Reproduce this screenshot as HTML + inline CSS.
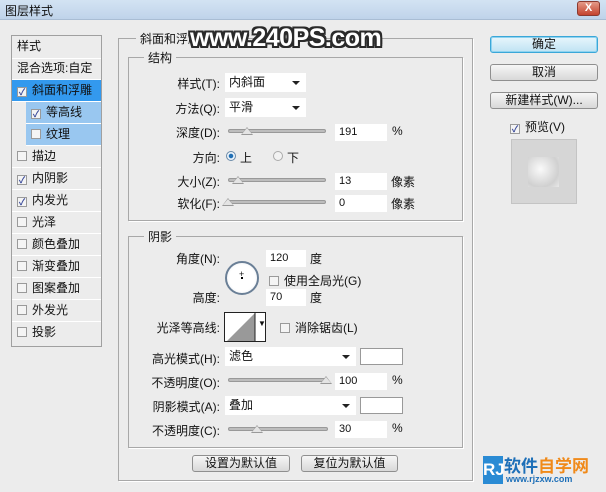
<!DOCTYPE html>
<html><head><meta charset="utf-8"><style>
*{box-sizing:border-box;margin:0;padding:0}
body{width:606px;height:492px;background:#ececec;font-family:"Liberation Sans","Noto Sans CJK SC",sans-serif;font-size:12px;color:#111;position:relative;overflow:hidden}
.a{position:absolute;white-space:nowrap}
.title{left:0;top:0;width:606px;height:20px;background:linear-gradient(#d3e3f3,#bfd3ea);border-bottom:1px solid #a9bdd4}
.close{left:577px;top:1px;width:23px;height:15px;background:linear-gradient(#e49a88,#c4432e);border:1px solid #8a3a30;border-radius:3px;color:#fff;font-weight:bold;font-size:11px;text-align:center;line-height:13px}
.lp{left:11px;top:35px;width:91px;height:312px;border:1px solid #a0a0a0;background:#ececec}
.row{position:absolute;left:0;width:89px;height:22px;line-height:21px;padding-left:5px;border-bottom:1px solid #fff}
.cb{display:inline-block;width:10px;height:10px;border:1px solid #9a9a9a;background:#f4f4f4;vertical-align:-1px;margin-right:5px;font-size:9px;line-height:8px;color:#3a4a9a;text-align:center;font-weight:bold}
.box{position:absolute;border:1px solid #a8a8a8;box-shadow:1px 1px 0 #fff}
.lbl{position:absolute;background:#ececec;padding:0 4px;font-size:12px}
.inp{position:absolute;background:#fff;height:17px;line-height:17px;padding-left:4px;font-size:11px}
.sel{position:absolute;background:#fff;height:19px;line-height:19px;padding-left:4px;font-size:12px}
.sel:after{content:"";position:absolute;right:6px;top:8px;border:4px solid transparent;border-top:4px solid #222}
.sl{position:absolute;height:4px;background:#bdbdbd;border:1px solid #999;border-radius:2px}
.th{position:absolute;width:0;height:0;border-left:6px solid transparent;border-right:6px solid transparent;border-bottom:8px solid #999}
.th:after{content:"";position:absolute;left:-5px;top:1px;border-left:5px solid transparent;border-right:5px solid transparent;border-bottom:6px solid #e4e4e4}
.r{text-align:right}
.btn{position:absolute;height:17px;border:1px solid #8f8f8f;border-radius:3px;background:linear-gradient(#f6f6f6,#d8d8d8);text-align:center;line-height:15px;font-size:12px}
</style></head><body>
<div class="a title"></div>
<div class="a" style="left:5px;top:2px;font-size:12px">图层样式</div>
<div class="a close">X</div>

<div class="a lp">
<div class="row" style="top:0;height:23px;line-height:20px">样式</div>
<div class="row" style="top:22px;line-height:20px">混合选项:自定</div>
<div class="row" style="top:44px;background:#3399ee;color:#111"><span class="cb">✓</span>斜面和浮雕</div>
<div class="row" style="top:66px;left:14px;width:75px;background:#99c7f0"><span class="cb">✓</span>等高线</div>
<div class="row" style="top:88px;left:14px;width:75px;background:#99c7f0"><span class="cb"></span>纹理</div>
<div class="row" style="top:110px"><span class="cb"></span>描边</div>
<div class="row" style="top:132px"><span class="cb">✓</span>内阴影</div>
<div class="row" style="top:154px"><span class="cb">✓</span>内发光</div>
<div class="row" style="top:176px"><span class="cb"></span>光泽</div>
<div class="row" style="top:198px"><span class="cb"></span>颜色叠加</div>
<div class="row" style="top:220px"><span class="cb"></span>渐变叠加</div>
<div class="row" style="top:242px"><span class="cb"></span>图案叠加</div>
<div class="row" style="top:264px"><span class="cb"></span>外发光</div>
<div class="row" style="top:286px;border:0"><span class="cb"></span>投影</div>
</div>

<div class="box" style="left:118px;top:38px;width:355px;height:443px"></div>
<div class="lbl" style="left:136px;top:30px">斜面和浮雕</div>
<div class="a" style="left:190px;top:24px;font-size:25px;font-weight:bold;color:#fff;letter-spacing:-0.5px;text-shadow:-2px 0 #2a2a2a,2px 0 #2a2a2a,0 2px #2a2a2a,0 -2px #2a2a2a,-2px -2px #2a2a2a,2px 2px #2a2a2a,2px -2px #2a2a2a,-2px 2px #2a2a2a">www.240PS.com</div>

<div class="box" style="left:128px;top:57px;width:335px;height:164px"></div>
<div class="lbl" style="left:144px;top:49px">结构</div>
<div class="a r" style="left:150px;top:75px;width:70px">样式(T):</div>
<div class="sel" style="left:225px;top:73px;width:81px">内斜面</div>
<div class="a r" style="left:150px;top:100px;width:70px">方法(Q):</div>
<div class="sel" style="left:225px;top:98px;width:81px">平滑</div>
<div class="a r" style="left:150px;top:124px;width:70px">深度(D):</div>
<div class="sl" style="left:228px;top:129px;width:98px"></div><div class="th" style="left:241px;top:127px"></div>
<div class="inp" style="left:335px;top:124px;width:52px">191</div><div class="a" style="left:392px;top:124px">%</div>
<div class="a r" style="left:150px;top:149px;width:70px">方向:</div>
<div class="a" style="left:226px;top:151px;width:10px;height:10px;border-radius:50%;border:1px solid #6a8aa8;background:radial-gradient(#1f6fb5 35%,#eaf2fa 45%)"></div>
<div class="a" style="left:240px;top:149px">上</div>
<div class="a" style="left:273px;top:151px;width:10px;height:10px;border-radius:50%;border:1px solid #aaa;background:#f2f2f2"></div>
<div class="a" style="left:287px;top:149px">下</div>
<div class="a r" style="left:150px;top:173px;width:70px">大小(Z):</div>
<div class="sl" style="left:228px;top:178px;width:98px"></div><div class="th" style="left:232px;top:176px"></div>
<div class="inp" style="left:335px;top:173px;width:52px">13</div><div class="a" style="left:391px;top:173px">像素</div>
<div class="a r" style="left:150px;top:195px;width:70px">软化(F):</div>
<div class="sl" style="left:228px;top:200px;width:98px"></div><div class="th" style="left:222px;top:198px"></div>
<div class="inp" style="left:335px;top:195px;width:52px">0</div><div class="a" style="left:391px;top:195px">像素</div>

<div class="box" style="left:128px;top:236px;width:335px;height:212px"></div>
<div class="lbl" style="left:144px;top:228px">阴影</div>
<div class="a r" style="left:150px;top:250px;width:70px">角度(N):</div>
<div class="a" style="left:225px;top:261px;width:34px;height:34px;border-radius:50%;border:2px solid #6a7f96;background:radial-gradient(#fff 60%,#dde3ea)"></div>
<div class="a" style="left:239px;top:269px;font-size:9px">+</div>
<div class="a" style="left:241px;top:277px;width:2px;height:2px;background:#000"></div>
<div class="inp" style="left:266px;top:250px;width:40px">120</div><div class="a" style="left:310px;top:250px">度</div>
<div class="a" style="left:269px;top:272px"><span class="cb"></span>使用全局光(G)</div>
<div class="a r" style="left:150px;top:289px;width:70px">高度:</div>
<div class="inp" style="left:266px;top:289px;width:40px">70</div><div class="a" style="left:310px;top:289px">度</div>
<div class="a r" style="left:130px;top:319px;width:90px">光泽等高线:</div>
<div class="a" style="left:224px;top:312px;width:42px;height:30px;border:1px solid #222;background:#fff"><svg width="40" height="28" style="position:absolute;left:0;top:0"><polygon points="2,28 30,0 30,28" fill="#999"/><line x1="30" y1="0" x2="30" y2="28" stroke="#222"/></svg><span style="position:absolute;left:33px;top:6px;font-size:8px">▼</span></div>
<div class="a" style="left:280px;top:319px"><span class="cb"></span>消除锯齿(L)</div>
<div class="a r" style="left:130px;top:350px;width:90px">高光模式(H):</div>
<div class="sel" style="left:225px;top:347px;width:131px">滤色</div>
<div class="a" style="left:360px;top:348px;width:43px;height:17px;background:#fff;border:1px solid #999"></div>
<div class="a r" style="left:130px;top:374px;width:90px">不透明度(O):</div>
<div class="sl" style="left:228px;top:378px;width:100px"></div><div class="th" style="left:320px;top:376px"></div>
<div class="inp" style="left:335px;top:373px;width:52px">100</div><div class="a" style="left:392px;top:373px">%</div>
<div class="a r" style="left:130px;top:398px;width:90px">阴影模式(A):</div>
<div class="sel" style="left:225px;top:396px;width:131px">叠加</div>
<div class="a" style="left:360px;top:397px;width:43px;height:17px;background:#fff;border:1px solid #999"></div>
<div class="a r" style="left:130px;top:422px;width:90px">不透明度(C):</div>
<div class="sl" style="left:228px;top:427px;width:100px"></div><div class="th" style="left:251px;top:425px"></div>
<div class="inp" style="left:335px;top:421px;width:52px">30</div><div class="a" style="left:392px;top:421px">%</div>

<div class="btn" style="left:192px;top:455px;width:98px">设置为默认值</div>
<div class="btn" style="left:301px;top:455px;width:97px">复位为默认值</div>

<div class="btn" style="left:490px;top:36px;width:108px;border-color:#3aa7d8;box-shadow:0 0 0 1px #8fd3f0 inset;background:linear-gradient(#e8f6fc,#bfe3f3)">确定</div>
<div class="btn" style="left:490px;top:64px;width:108px">取消</div>
<div class="btn" style="left:490px;top:92px;width:108px">新建样式(W)...</div>
<div class="a" style="left:510px;top:118px"><span class="cb">✓</span>预览(V)</div>
<div class="a" style="left:511px;top:139px;width:66px;height:65px;background:#d6d6d6;border:1px solid #c4c4c4"></div>
<div class="a" style="left:528px;top:157px;width:31px;height:30px;background:radial-gradient(circle at 40% 40%,#fafafa,#d0d0d0 70%,#e8e8e8)"></div>

<div class="a" style="left:483px;top:456px;width:20px;height:28px;background:#2a8bd4;color:#fff;font-weight:bold;font-size:17px;line-height:28px;text-align:center">RJ</div>
<div class="a" style="left:504px;top:452px;font-size:17px;font-weight:bold;color:#1d6fb8">软件<span style="color:#f08a1a">自学网</span></div>
<div class="a" style="left:506px;top:474px;font-size:9px;font-weight:bold;color:#1d6fb8">www.rjzxw.com</div>
</body></html>
